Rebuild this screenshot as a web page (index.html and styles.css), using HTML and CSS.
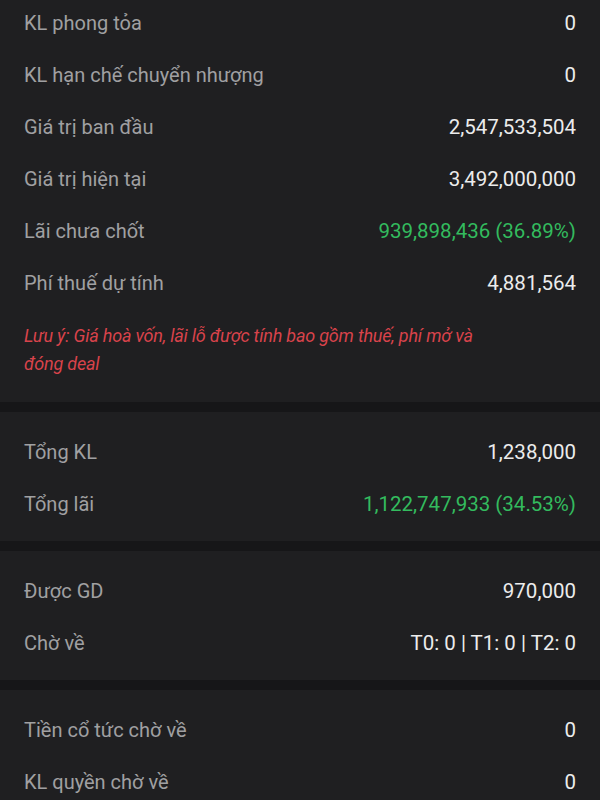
FILE: index.html
```html
<!DOCTYPE html>
<html lang="vi">
<head>
    <meta charset="UTF-8">
    <meta name="viewport" content="width=device-width, initial-scale=1.0">
    <title>Chi tiết danh mục</title>
    <link rel="stylesheet" href="styles.css">
</head>
<body>

    <div class="section first">
        <div class="row"><span class="label">KL phong tỏa</span><span class="value">0</span></div>
        <div class="row"><span class="label">KL hạn chế chuyển nhượng</span><span class="value">0</span></div>
        <div class="row"><span class="label">Giá trị ban đầu</span><span class="value">2,547,533,504</span></div>
        <div class="row"><span class="label">Giá trị hiện tại</span><span class="value">3,492,000,000</span></div>
        <div class="row"><span class="label">Lãi chưa chốt</span><span class="value up">939,898,436 (36.89%)</span></div>
        <div class="row"><span class="label">Phí thuế dự tính</span><span class="value">4,881,564</span></div>
        <p class="note">Lưu ý: Giá hoà vốn, lãi lỗ được tính bao gồm thuế, phí mở và đóng deal</p>
    </div>

    <div class="section">
        <div class="row"><span class="label">Tổng KL</span><span class="value">1,238,000</span></div>
        <div class="row"><span class="label">Tổng lãi</span><span class="value up">1,122,747,933 (34.53%)</span></div>
    </div>

    <div class="section">
        <div class="row"><span class="label">Được GD</span><span class="value">970,000</span></div>
        <div class="row"><span class="label">Chờ về</span><span class="value">T0: 0 | T1: 0 | T2: 0</span></div>
    </div>

    <div class="section">
        <div class="row"><span class="label">Tiền cổ tức chờ về</span><span class="value">0</span></div>
        <div class="row"><span class="label">KL quyền chờ về</span><span class="value">0</span></div>
    </div>

</body>
</html>
```

FILE: styles.css
```css
body {
    margin: 0;
    padding: 0;
    background-color: #161618;
    font-family: Roboto, "Noto Sans", sans-serif;
    font-size: 20px;
}
.section {
    background-color: #1f1f21;
    padding: 14px 24px 11px;
    margin-bottom: 10px;
}
.section.first {
    margin-top: -17px;
    padding-bottom: 24px;
}
.row {
    display: flex;
    justify-content: space-between;
    align-items: center;
    height: 52px;
}
.label {
    color: #a0a0a2;
}
.value {
    color: #ececec;
    font-size: 20.5px;
}
.value.up {
    color: #33bb5e;
}
.note {
    margin: 13px 0 0;
    padding-right: 70px;
    color: #d8434b;
    font-size: 18px;
    font-style: italic;
    letter-spacing: -0.2px;
    line-height: 28px;
}
```
